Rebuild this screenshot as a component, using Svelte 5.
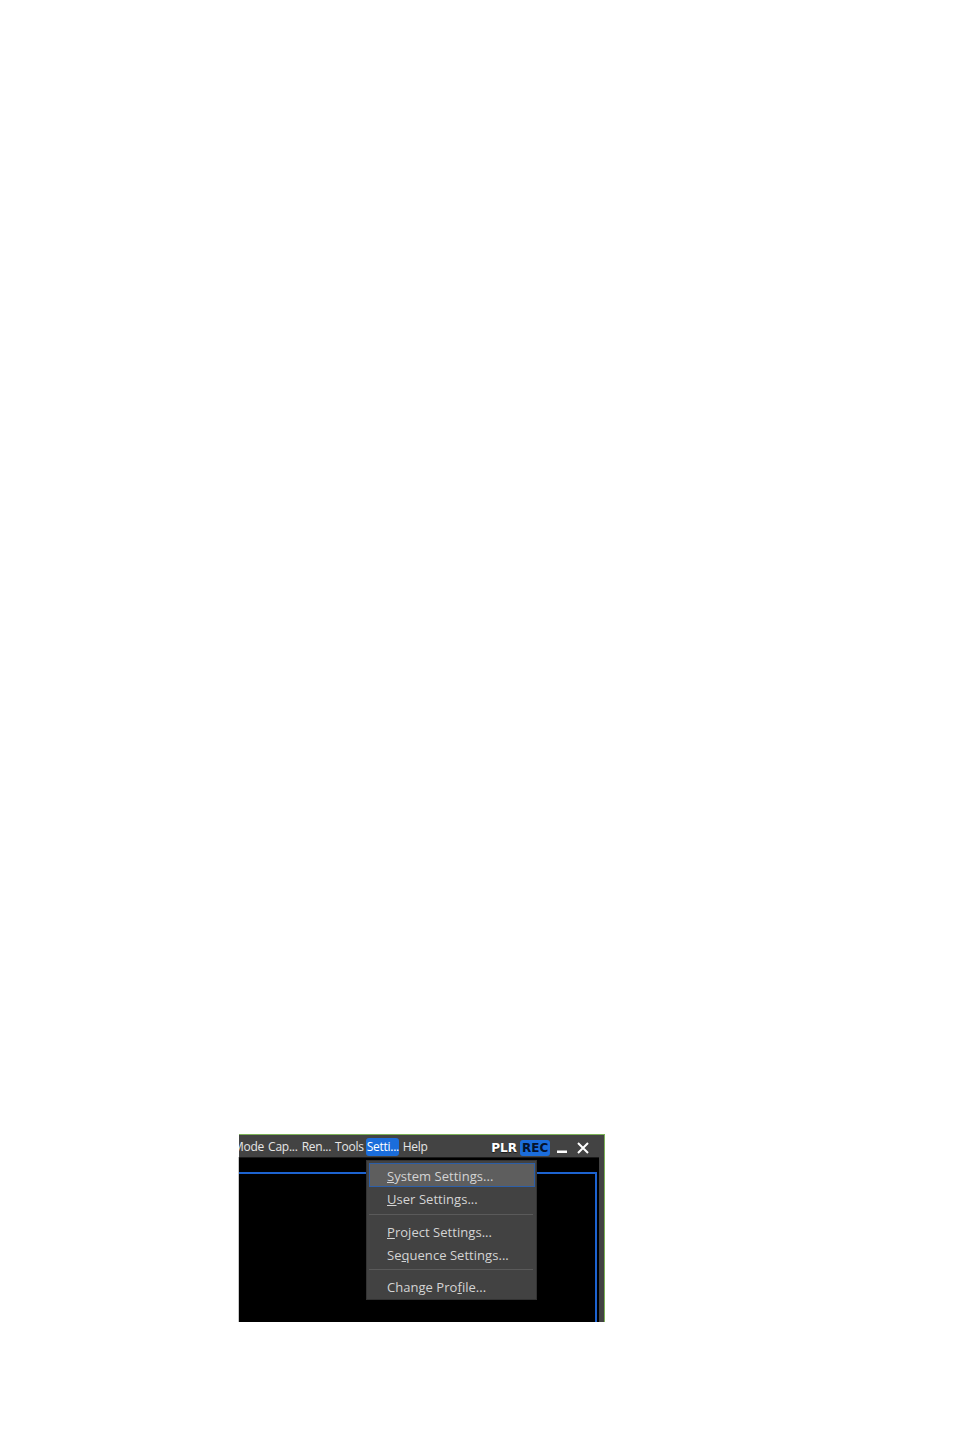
<script lang="ts">
	const menus = [
		{ label: 'Mode', cls: 'first' },
		{ label: 'Cap...', cls: '' },
		{ label: 'Ren...', cls: '' },
		{ label: 'Tools', cls: '' },
		{ label: 'Setti...', cls: 'open' },
		{ label: 'Help', cls: '' }
	];
</script>

<main class="page">
	<div class="window">
		<header class="titlebar">
			<nav class="menubar">
				{#each menus as menu}
					<span class="menu {menu.cls}">{menu.label}</span>
				{/each}
			</nav>
			<div class="controls">
				<span class="badge">PLR</span>
				<span class="badge rec">REC</span>
				<svg class="min" width="12" height="12" viewBox="0 0 12 12" aria-hidden="true">
					<rect x="1" y="8.5" width="10" height="2.5" fill="#fff" />
				</svg>
				<svg class="close" width="12" height="12" viewBox="0 0 12 12" aria-hidden="true">
					<path d="M1 1 L11 11 M11 1 L1 11" stroke="#fff" stroke-width="2" fill="none" />
				</svg>
			</div>
		</header>
		<div class="viewport">
			<div class="frame"></div>
			<div class="dropdown">
				<div class="item active"><u>S</u>ystem Settings...</div>
				<div class="item"><u>U</u>ser Settings...</div>
				<div class="sep"></div>
				<div class="item"><u>P</u>roject Settings...</div>
				<div class="item">Se<u>q</u>uence Settings...</div>
				<div class="sep lower"></div>
				<div class="item">Change Pro<u>f</u>ile...</div>
			</div>
		</div>
	</div>
</main>

<style>
	:global(body) {
		margin: 0;
		background: #fff;
	}

	.page {
		height: 1432px;
		padding: 1134px 0 0 239px;
		box-sizing: border-box;
	}

	.window {
		width: 366px;
		height: 188px;
		box-sizing: border-box;
		border-top: 1px solid #7cb257;
		border-right: 1px solid #7cb257;
		background: #424242;
		display: flex;
		flex-direction: column;
		font-family: 'Open Sans', 'Noto Sans', sans-serif;
	}

	.titlebar {
		height: 22px;
		flex: none;
		display: flex;
		justify-content: space-between;
		background: #434343;
		overflow: hidden;
	}

	.menubar {
		display: flex;
		align-items: center;
		margin-left: -8px;
	}

	.menu {
		font-size: 12px;
		letter-spacing: -0.25px;
		color: #e6e6e6;
		line-height: 18px;
		padding: 0 2px;
		margin-top: 2px;
		white-space: nowrap;
	}

	.menu.open {
		background: #1b6ddb;
		border-radius: 3px;
		color: #fff;
		padding: 0 1px;
		margin: 2px 2px 0 0;
		width: 31px;
		overflow: hidden;
	}

	.controls {
		display: flex;
		align-items: center;
		margin-right: 15px;
		padding-top: 3px;
	}

	.badge {
		font-family: 'DejaVu Sans', sans-serif;
		font-weight: 700;
		font-size: 12px;
		line-height: 16px;
		color: #fff;
		text-shadow: 0 1px 1px #1a1a1a;
	}

	.badge.rec {
		background: #1b6ddb;
		color: #05122b;
		border-radius: 3px;
		margin-left: 3px;
		padding: 0 2px;
		width: 30px;
		box-sizing: border-box;
		text-shadow: none;
	}

	.min {
		margin-left: 6px;
	}

	.close {
		margin-left: 9px;
	}

	.viewport {
		position: relative;
		flex: 1;
		margin-right: 5px;
		background: #000;
		border-top: 1px solid #1a1a1a;
		box-shadow: -1px 0 0 #c8c8c8;
		padding-top: 14px;
		box-sizing: border-box;
		display: flex;
		flex-direction: column;
	}

	.frame {
		flex: 1;
		margin-right: 2px;
		border-top: 2px solid #1d63d0;
		border-right: 2px solid #1d63d0;
	}

	.dropdown {
		position: absolute;
		left: 127px;
		top: 2px;
		width: 171px;
		height: 140px;
		box-sizing: border-box;
		padding: 3px;
		background: #424242;
		border: 1px solid #333;
		color: #d4d4d4;
		font-size: 13px;
		letter-spacing: 0.04px;
	}

	.item {
		height: 23px;
		line-height: 23px;
		padding: 1px 0 0 17px;
		box-sizing: border-box;
		white-space: nowrap;
	}

	.item.active {
		height: 24px;
		margin: -1px 0 0 -1px;
		width: 166px;
		background: #5e5e5e;
		border: 1px solid #2d5fa8;
		padding: 1px 0 0 17px;
		line-height: 23px;
	}

	.sep {
		height: 1px;
		background: #5a5a5a;
		margin: 4px 0 5px -1px;
		width: 164px;
	}

	.sep.lower {
		margin-top: 3px;
	}
</style>
